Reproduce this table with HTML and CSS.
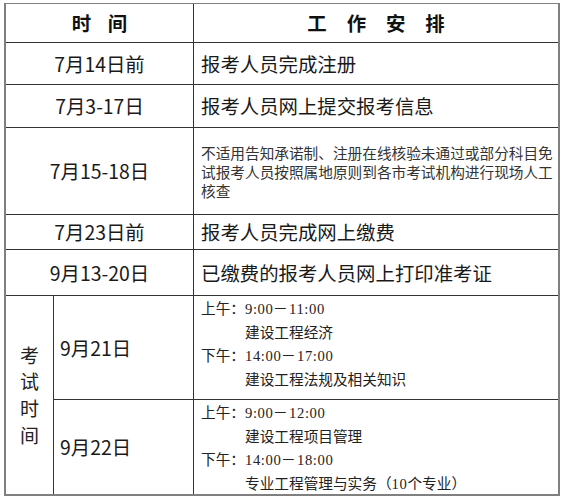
FILE: index.html
```html
<!DOCTYPE html>
<html lang="zh-CN">
<head>
<meta charset="utf-8">
<title>考试时间安排</title>
<link rel="stylesheet" href="styles.css">
</head>
<body>
<div class="sheet">
  <div class="cell head span2"><span class="head-a">时间</span></div>
  <div class="cell head"><span class="head-b">工作安排</span></div>

  <div class="cell date span2">7月14日前</div>
  <div class="cell work">报考人员完成注册</div>

  <div class="cell date span2">7月3-17日</div>
  <div class="cell work">报考人员网上提交报考信息</div>

  <div class="cell date span2">7月15-18日</div>
  <div class="cell work small">不适用告知承诺制、注册在线核验未通过或部分科目免试报考人员按照属地原则到各市考试机构进行现场人工核查</div>

  <div class="cell date span2">7月23日前</div>
  <div class="cell work">报考人员完成网上缴费</div>

  <div class="cell date span2">9月13-20日</div>
  <div class="cell work">已缴费的报考人员网上打印准考证</div>

  <div class="cell vert">考试时间</div>
  <div class="cell day">9月21日</div>
  <div class="cell exam">
    <div class="line">上午：<span class="t">9:00－11:00</span></div>
    <div class="line sub">建设工程经济</div>
    <div class="line">下午：<span class="t">14:00－17:00</span></div>
    <div class="line sub">建设工程法规及相关知识</div>
  </div>

  <div class="cell day">9月22日</div>
  <div class="cell exam">
    <div class="line">上午：<span class="t">9:00－12:00</span></div>
    <div class="line sub">建设工程项目管理</div>
    <div class="line">下午：<span class="t">14:00－18:00</span></div>
    <div class="line sub">专业工程管理与实务（<span class="t">10</span>个专业）</div>
  </div>
</div>
</body>
</html>
```

FILE: styles.css
```css
html, body {
  margin: 0;
  padding: 0;
  background: #ffffff;
}

body {
  font-family: "Noto Sans CJK SC", "Noto Sans", sans-serif;
  color: #1a1a1a;
}

.sheet {
  margin: 3px 0 0 4px;
  width: 552px;
  display: grid;
  grid-template-columns: 47px 139px 364px;
  grid-template-rows: 38px 41px 42px 86px 34px 45px 103px 94px;
  gap: 1px;
  background: #333333;
  border-style: solid;
  border-color: #808080;
  border-width: 1px 2px 2px 2px;
}

.cell {
  background: #ffffff;
  display: flex;
  align-items: center;
  font-size: 19.4px;
  line-height: 26px;
}

.span2 {
  grid-column: 1 / span 2;
  justify-content: center;
}

.head {
  font-weight: 700;
  color: #111111;
  justify-content: center;
}

.head-a {
  letter-spacing: 16.6px;
  padding-left: 16.6px;
}

.head-b {
  letter-spacing: 19.9px;
  padding-left: 19.9px;
}

.work {
  padding-left: 7px;
}

.small {
  font-size: 14.67px;
  line-height: 19px;
  color: #333333;
  padding-right: 4px;
}

.vert {
  grid-row: 7 / span 2;
  justify-content: center;
  text-align: center;
  font-size: 19px;
  line-height: 26.7px;
  color: #222222;
  padding: 0 14px;
  word-break: break-all;
}

.day {
  padding-left: 6px;
}

.exam {
  display: block;
  padding-left: 7px;
  font-size: 14.67px;
  line-height: 23.7px;
  color: #222222;
}

.line {
  height: 23.7px;
  white-space: nowrap;
}

.line.sub {
  padding-left: 44px;
}

.t {
  font-family: "Liberation Serif", serif;
  letter-spacing: 0.6px;
  line-height: 1;
}
```
